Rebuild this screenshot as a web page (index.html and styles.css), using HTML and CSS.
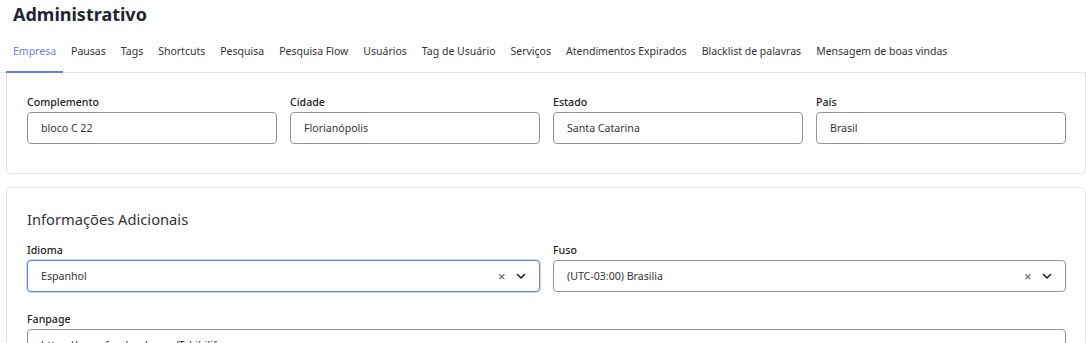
FILE: index.html
```html
<!DOCTYPE html>
<html lang="pt-BR">

<head>
    <meta charset="UTF-8">
    <meta name="viewport" content="width=device-width, initial-scale=1.0">
    <title>Administrativo</title>
    <link rel="stylesheet" href="styles.css">
</head>

<body>
    <h1 class="page-title">Administrativo</h1>

    <nav class="tabs">
        <a class="tab active" href="#">Empresa</a>
        <a class="tab" href="#">Pausas</a>
        <a class="tab" href="#">Tags</a>
        <a class="tab" href="#">Shortcuts</a>
        <a class="tab" href="#">Pesquisa</a>
        <a class="tab" href="#">Pesquisa Flow</a>
        <a class="tab" href="#">Usuários</a>
        <a class="tab" href="#">Tag de Usuário</a>
        <a class="tab" href="#">Serviços</a>
        <a class="tab" href="#">Atendimentos Expirados</a>
        <a class="tab" href="#">Blacklist de palavras</a>
        <a class="tab" href="#">Mensagem de boas vindas</a>
    </nav>

    <div class="content">
        <!-- endereço (topo rolado para fora da tela) -->
        <section class="card card-scrolled">
            <div class="row cols-4">
                <div class="field">
                    <label>Complemento</label>
                    <input class="input" type="text" value="bloco C 22">
                </div>
                <div class="field">
                    <label>Cidade</label>
                    <input class="input" type="text" value="Florianópolis">
                </div>
                <div class="field">
                    <label>Estado</label>
                    <input class="input" type="text" value="Santa Catarina">
                </div>
                <div class="field">
                    <label>País</label>
                    <input class="input" type="text" value="Brasil">
                </div>
            </div>
        </section>

        <section class="card">
            <h2 class="card-title">Informações Adicionais</h2>

            <div class="row cols-2">
                <div class="field">
                    <label>Idioma</label>
                    <div class="select focused">
                        <span class="select-value">Espanhol</span>
                        <span class="select-clear">&#x2715;</span>
                        <svg class="select-arrow" viewBox="0 0 12 12">
                            <path d="M2.5 4.5 L6 8 L9.5 4.5" fill="none" stroke="#222" stroke-width="1.6" stroke-linecap="round" stroke-linejoin="round"/>
                        </svg>
                    </div>
                </div>
                <div class="field">
                    <label>Fuso</label>
                    <div class="select">
                        <span class="select-value">(UTC-03:00) Brasilia</span>
                        <span class="select-clear">&#x2715;</span>
                        <svg class="select-arrow" viewBox="0 0 12 12">
                            <path d="M2.5 4.5 L6 8 L9.5 4.5" fill="none" stroke="#222" stroke-width="1.6" stroke-linecap="round" stroke-linejoin="round"/>
                        </svg>
                    </div>
                </div>
            </div>

            <div class="field">
                <label>Fanpage</label>
                <input class="input" type="text" value="https://www.facebook.com/Tchibilife">
            </div>
        </section>
    </div>
</body>

</html>
```

FILE: styles.css
```css
* {
    margin: 0;
    padding: 0;
    box-sizing: border-box;
}

html,
body {
    height: 100%;
    overflow: hidden;
}

body {
    font-family: "Noto Sans", "Open Sans", Arial, sans-serif;
    background-color: #fff;
    color: #333;
    font-size: 10.6px;
}

.page-title {
    font-size: 18px;
    font-weight: 700;
    color: #222530;
    line-height: 28px;
    padding: 0 13px;
}

.tabs {
    display: flex;
    padding: 0 6px;
    margin-top: 1px;
    border-bottom: 1px solid #e3e6ec;
}

.tab {
    display: block;
    padding: 2px 7px 0;
    margin-right: 1px;
    line-height: 40px;
    color: #333;
    text-decoration: none;
    font-size: 10.5px;
    border-bottom: 2px solid transparent;
    margin-bottom: -1px;
}

.tab.active {
    color: #6f7ff0;
    border-bottom-color: #6f7ff0;
}

.content {
    padding: 0 0 0 6px;
}

.card {
    width: 1080px;
    border: 1px solid #e3e6ec;
    border-radius: 5px;
    padding: 20px 19px 20px 20px;
    background: #fff;
}

.card-scrolled {
    border-top: none;
    border-top-left-radius: 0;
    border-top-right-radius: 0;
    padding-top: 21px;
    padding-bottom: 29px;
}

.card + .card {
    margin-top: 13px;
}

.card-title {
    font-size: 14.7px;
    font-weight: 400;
    color: #333;
    line-height: 22px;
    margin-bottom: 12px;
}

.row {
    display: grid;
    column-gap: 13px;
}

.cols-4 {
    grid-template-columns: repeat(4, 1fr);
}

.cols-2 {
    grid-template-columns: repeat(2, 1fr);
    margin-bottom: 19px;
}

.field label {
    display: block;
    font-size: 10.6px;
    font-weight: 500;
    color: #222;
    line-height: 16px;
    margin-bottom: 2px;
}

.input,
.select {
    width: 100%;
    height: 32px;
    border: 1px solid #94949c;
    border-radius: 4px;
    padding: 0 13px;
    font-family: inherit;
    font-size: 10.6px;
    color: #333;
    background: #fff;
    outline: none;
}

.select {
    display: flex;
    align-items: center;
    padding-right: 12px;
}

.select.focused {
    border-color: #5b86e5;
    box-shadow: 0 0 0 1px rgba(91, 134, 229, 0.35);
}

.select-value {
    flex: 1;
}

.select-clear {
    color: #777;
    font-size: 9px;
    font-weight: 700;
    margin-right: 9px;
}

.select-arrow {
    width: 12px;
    height: 12px;
}
```
